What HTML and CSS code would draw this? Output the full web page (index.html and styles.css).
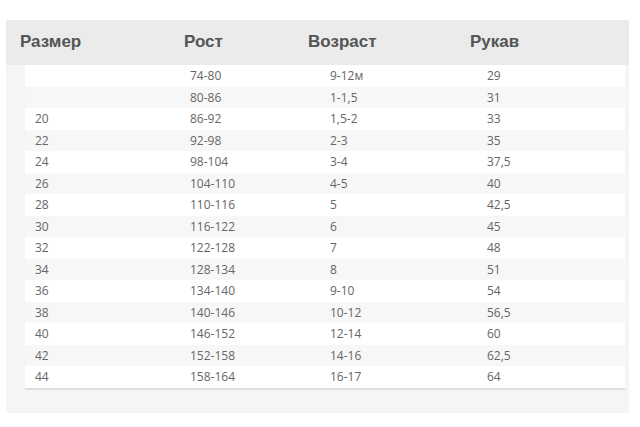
FILE: index.html
```html
<!DOCTYPE html>
<html lang="ru">
<head>
<meta charset="utf-8">
<link rel="stylesheet" href="styles.css">
</head>
<body>
<div class="panel">
  <div class="head">
    <div>Размер</div><div>Рост</div><div>Возраст</div><div>Рукав</div>
  </div>
  <div class="table">
    <div class="row"><div></div><div>74-80</div><div>9-12м</div><div>29</div></div>
    <div class="row"><div></div><div>80-86</div><div>1-1,5</div><div>31</div></div>
    <div class="row"><div>20</div><div>86-92</div><div>1,5-2</div><div>33</div></div>
    <div class="row"><div>22</div><div>92-98</div><div>2-3</div><div>35</div></div>
    <div class="row"><div>24</div><div>98-104</div><div>3-4</div><div>37,5</div></div>
    <div class="row"><div>26</div><div>104-110</div><div>4-5</div><div>40</div></div>
    <div class="row"><div>28</div><div>110-116</div><div>5</div><div>42,5</div></div>
    <div class="row"><div>30</div><div>116-122</div><div>6</div><div>45</div></div>
    <div class="row"><div>32</div><div>122-128</div><div>7</div><div>48</div></div>
    <div class="row"><div>34</div><div>128-134</div><div>8</div><div>51</div></div>
    <div class="row"><div>36</div><div>134-140</div><div>9-10</div><div>54</div></div>
    <div class="row"><div>38</div><div>140-146</div><div>10-12</div><div>56,5</div></div>
    <div class="row"><div>40</div><div>146-152</div><div>12-14</div><div>60</div></div>
    <div class="row"><div>42</div><div>152-158</div><div>14-16</div><div>62,5</div></div>
    <div class="row"><div>44</div><div>158-164</div><div>16-17</div><div>64</div></div>
  </div>
</div>
</body>
</html>
```
FILE: styles.css
```css
html, body { margin: 0; padding: 0; background: #fff; }
.panel {
  margin: 20px 0 0 6px;
  width: 623px;
  height: 393px;
  background: #f5f5f5;
  box-sizing: border-box;
}
.head {
  height: 45px;
  background: #ebebeb;
  display: grid;
  grid-template-columns: 164px 124px 162px 1fr;
  padding-left: 14px;
  align-items: center;
  font-family: "Liberation Sans", Arial, sans-serif;
  font-weight: bold;
  font-size: 17px;
  color: #555;
  box-sizing: border-box;
  padding-bottom: 2px;
}
.table {
  margin: 0 4px 0 19px;
  border-bottom: 2px solid #dedede;
}
.row {
  height: 21.5px;
  display: grid;
  grid-template-columns: 155px 140px 157px 1fr;
  padding-left: 10px;
  align-items: center;
  font-family: "Open Sans", sans-serif;
  font-size: 12px;
  color: #666;
  background: #fff;
}
.row:nth-child(even) { background: #f7f7f7; }
```
